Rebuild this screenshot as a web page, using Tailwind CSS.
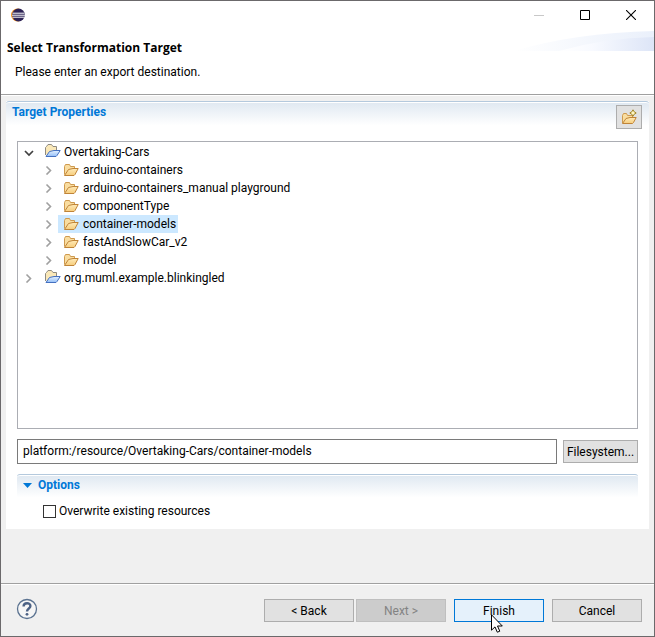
<!DOCTYPE html>
<html lang="en">
<head>
<meta charset="utf-8">
<title>Select Transformation Target</title>
<script src="https://cdn.jsdelivr.net/npm/@tailwindcss/browser@4"></script>
</head>
<body class="font-['Roboto','Noto_Sans',sans-serif] text-[12px] leading-[18px] text-black">
<svg class="absolute size-0" aria-hidden="true">
  <defs>
    <linearGradient id="gold" x1="0" y1="0" x2="0" y2="1"><stop offset="0" stop-color="#ffeab8"/><stop offset="1" stop-color="#f6cd7c"/></linearGradient>
    <linearGradient id="blue" x1="0" y1="0" x2="0" y2="1"><stop offset="0" stop-color="#e2f0ff"/><stop offset="1" stop-color="#94bff8"/></linearGradient>
    <symbol id="folder" viewBox="0 0 16 16">
      <path d="M1.500 12.500V4.500L2.500 2.500H6.500L7.500 4.500H11.500V7" fill="#f9dda0" stroke="#cf9a4e" stroke-linejoin="round"/>
      <path d="M1.500 13.500L5.500 7.500L10 6.500H15.200L12 12.500L11 13.500Z" fill="url(#gold)" stroke="#c08438" stroke-linejoin="round"/>
    </symbol>
    <symbol id="project" viewBox="0 0 16 16">
      <path d="M.5 11V3.500L1.500 2.500L3 .5H6.500L8 2.500H11.500V6" fill="#fae8b8" stroke="#8f8a80" stroke-linejoin="round"/>
      <path d="M1 12.500L4.500 7.500L9 6.500H15.200L12 11.500L11 12.500Z" fill="url(#blue)" stroke="#4470c0" stroke-linejoin="round"/>
    </symbol>
    <symbol id="closed" viewBox="0 0 10 10"><path d="M2.500 1.500L6.500 5.500L2.500 9.500" fill="none" stroke="#a0a0a0" stroke-width="1.600"/></symbol>
    <symbol id="open" viewBox="0 0 10 10"><path d="M1 4L5 8L9 4" fill="none" stroke="#404040" stroke-width="1.700"/></symbol>
  </defs>
</svg>
<div class="flex min-h-screen flex-col border border-[#6b696b] bg-[#f0f0f0]">
  <header class="border-b border-[#a0a0a0] bg-white">
    <div class="mb-[2px] flex h-[28px] items-center justify-between pl-[10px]">
      <svg class="size-[14px]" viewBox="0 0 14 14" aria-label="Eclipse">
        <circle cx="6.500" cy="7" r="6.500" fill="#f7941e"/><circle cx="7.500" cy="7" r="6.400" fill="#2c2255"/>
        <path d="M1.500 5.200H13.600M1 7.200H14M1.500 9.200H13.600" stroke="#fff" stroke-width="1"/>
      </svg>
      <div class="flex">
        <button class="flex h-[28px] w-[46px] items-center justify-center" aria-label="Minimize" disabled><svg class="size-[10px]" viewBox="0 0 10 10"><path d="M0 5.500H10" stroke="#c8c8c8"/></svg></button>
        <button class="flex h-[28px] w-[46px] items-center justify-center" aria-label="Maximize"><svg class="size-[10px]" viewBox="0 0 10 10"><path d="M.5 .5H9.500V9.500H.5Z" fill="none" stroke="#000"/></svg></button>
        <button class="flex h-[28px] w-[46px] items-center justify-center" aria-label="Close"><svg class="size-[10px]" viewBox="0 0 10 10"><path d="M0 0L10 10M10 0L0 10" stroke="#000" stroke-width="1.100"/></svg></button>
      </div>
    </div>
    <div class="flex h-[63px] justify-between pl-[6px]">
      <div class="pt-[8px]">
        <h1 class="font-['Open_Sans',sans-serif] font-bold">Select Transformation Target</h1>
        <p class="pt-[6px] pl-[8px]">Please enter an export destination.</p>
      </div>
      <svg class="h-[20px] w-[140px]" viewBox="0 0 140 20" aria-hidden="true">
        <defs><linearGradient id="swoosh"><stop offset="0" stop-color="#fff"/><stop offset=".35" stop-color="#f8faff"/><stop offset="1" stop-color="#dde5f7"/></linearGradient>
        <linearGradient id="swooshTop"><stop offset="0" stop-color="#fff"/><stop offset="1" stop-color="#eaf0fb"/></linearGradient></defs>
        <path d="M0 20Q60 2 140 0V20Z" fill="url(#swooshTop)"/>
        <path d="M45 20Q90 7 140 6V20Z" fill="url(#swoosh)"/>
      </svg>
    </div>
  </header>
  <main class="flex grow flex-col border-t border-white px-[5px] pt-[5px] pb-[54px]">
    <section class="flex grow flex-col bg-white pb-[9px]">
      <div class="flex h-[40px] items-start justify-between rounded-t-[3px] border-t border-[#b4c9dd] bg-linear-to-b from-[#dfe8f1] to-white to-60% pr-[7px] pl-[6px] shadow-[inset_0_1px_0_#fff]">
        <h2 class="pt-[1px] font-bold text-[#0078d7]">Target Properties</h2>
        <button class="mt-[3px] flex h-[24px] w-[26px] items-center justify-center border border-[#adadad] bg-[#e1e1e1]" aria-label="New folder">
          <svg class="size-[16px]" viewBox="0 0 16 16">
            <path d="M1.500 14V6.500L2.500 4.500H5.500L6.500 6.500H11.500V9" fill="#f9dda0" stroke="#cf9a4e" stroke-linejoin="round"/>
            <path d="M1.500 14.500L5 9.500L9 8.500H15.200L12.500 13.500L11.500 14.500Z" fill="url(#gold)" stroke="#c08438" stroke-linejoin="round"/>
            <path d="M12 .8L13.200 2.800L15.200 4L13.200 5.200L12 7.200L10.800 5.200L8.800 4L10.800 2.800Z" fill="#fff6c0" stroke="#a08428"/>
          </svg>
        </button>
      </div>
      <div class="flex grow flex-col px-[11px]">
        <ul class="grow border border-[#abadb3] pt-[1px] pl-[6px]" role="tree" aria-label="Target">
          <li role="treeitem" aria-expanded="true">
            <div class="flex h-[18px] items-center"><button class="mr-[11px] size-[10px]" aria-label="Collapse"><svg class="size-[10px]"><use href="#open"/></svg></button><svg class="size-[16px]"><use href="#project"/></svg><span class="pl-[3px]">Overtaking-Cars</span></div>
            <ul role="group" class="pl-[20px]">
              <li role="treeitem" class="flex h-[18px] items-center"><button class="mr-[4px] size-[10px]" aria-label="Expand"><svg class="size-[10px]"><use href="#closed"/></svg></button><span class="flex items-center pr-[2px] pl-[5px]"><svg class="size-[16px]"><use href="#folder"/></svg><span class="pl-[4px]">arduino-containers</span></span></li>
              <li role="treeitem" class="flex h-[18px] items-center"><button class="mr-[4px] size-[10px]" aria-label="Expand"><svg class="size-[10px]"><use href="#closed"/></svg></button><span class="flex items-center pr-[2px] pl-[5px]"><svg class="size-[16px]"><use href="#folder"/></svg><span class="pl-[4px]">arduino-containers_manual playground</span></span></li>
              <li role="treeitem" class="flex h-[18px] items-center"><button class="mr-[4px] size-[10px]" aria-label="Expand"><svg class="size-[10px]"><use href="#closed"/></svg></button><span class="flex items-center pr-[2px] pl-[5px]"><svg class="size-[16px]"><use href="#folder"/></svg><span class="pl-[4px]">componentType</span></span></li>
              <li role="treeitem" aria-selected="true" class="flex h-[18px] items-center"><button class="mr-[4px] size-[10px]" aria-label="Expand"><svg class="size-[10px]"><use href="#closed"/></svg></button><span class="flex items-center bg-[#cce8ff] pr-[2px] pl-[5px]"><svg class="size-[16px]"><use href="#folder"/></svg><span class="pl-[4px]">container-models</span></span></li>
              <li role="treeitem" class="flex h-[18px] items-center"><button class="mr-[4px] size-[10px]" aria-label="Expand"><svg class="size-[10px]"><use href="#closed"/></svg></button><span class="flex items-center pr-[2px] pl-[5px]"><svg class="size-[16px]"><use href="#folder"/></svg><span class="pl-[4px]">fastAndSlowCar_v2</span></span></li>
              <li role="treeitem" class="flex h-[18px] items-center"><button class="mr-[4px] size-[10px]" aria-label="Expand"><svg class="size-[10px]"><use href="#closed"/></svg></button><span class="flex items-center pr-[2px] pl-[5px]"><svg class="size-[16px]"><use href="#folder"/></svg><span class="pl-[4px]">model</span></span></li>
            </ul>
          </li>
          <li role="treeitem" class="flex h-[18px] items-center"><button class="mr-[11px] size-[10px]" aria-label="Expand"><svg class="size-[10px]"><use href="#closed"/></svg></button><svg class="size-[16px]"><use href="#project"/></svg><span class="pl-[3px]">org.muml.example.blinkingled</span></li>
        </ul>
        <div class="flex items-center gap-[6px] py-[10px]">
          <input class="h-[25px] min-w-0 grow border border-[#7a7a7a] bg-white px-[5px] pb-[2px]" type="text" aria-label="Target path" value="platform:/resource/Overtaking-Cars/container-models">
          <button class="h-[23px] w-[75px] border border-[#adadad] bg-[#e1e1e1]">Filesystem...</button>
        </div>
        <section>
          <h2 class="h-[26px] rounded-t-[3px] border-t border-[#b4c9dd] bg-linear-to-b from-[#dfe8f1] to-white to-90% shadow-[inset_0_1px_0_#fff]">
            <button class="flex items-center gap-[5px] pt-[1px] pl-[6px] font-bold text-[#0078d7]" aria-expanded="true"><svg class="h-[5px] w-[10px]" viewBox="0 0 10 5"><path d="M0 0H9L4.500 5Z" fill="#0078d7"/></svg>Options</button>
          </h2>
          <label class="flex items-center gap-[3px] pt-[2px] pl-[26px]"><input type="checkbox" class="size-[13px] appearance-none border border-[#333] bg-white">Overwrite existing resources</label>
        </section>
      </div>
    </section>
  </main>
  <footer class="border-t border-[#a0a0a0]">
    <div class="flex h-[52px] items-center border-t border-white pr-[12px] pl-[15px]">
      <button class="mr-auto" aria-label="Help"><svg class="mb-[3px] block size-[22px]" viewBox="0 0 22 22"><circle cx="11" cy="11" r="9.500" fill="#f6f6f6" stroke="#5a7290" stroke-width="1.300"/><path d="M7.600 8.500C7.600 4.200 14.400 4.200 14.400 8C14.400 10.500 11 10.500 11 13.500" fill="none" stroke="#4c6285" stroke-width="2.400"/><circle cx="11" cy="16.300" r="1.400" fill="#4c6285"/></svg></button>
      <div class="flex gap-[8px]">
        <div class="flex gap-[2px]">
          <button class="h-[23px] w-[90px] border border-[#adadad] bg-[#e1e1e1]">&lt; Back</button>
          <button class="h-[23px] w-[90px] border border-[#bfbfbf] bg-[#cccccc] text-[#838383]" disabled>Next &gt;</button>
        </div>
        <div class="relative">
          <button class="h-[23px] w-[90px] border border-[#0078d7] bg-[#e5f1fb]">Finish</button>
          <svg class="pointer-events-none absolute top-[15px] left-[37px] h-[19px] w-[12px]" viewBox="0 0 12 19" aria-hidden="true"><path d="M.5 .8V16.200L4 12.900L6.300 18.200L8.800 17.200L6.500 12H11.300Z" fill="#fff" stroke="#000"/></svg>
        </div>
        <button class="h-[23px] w-[90px] border border-[#adadad] bg-[#e1e1e1]">Cancel</button>
      </div>
    </div>
  </footer>
</div>
</body>
</html>
